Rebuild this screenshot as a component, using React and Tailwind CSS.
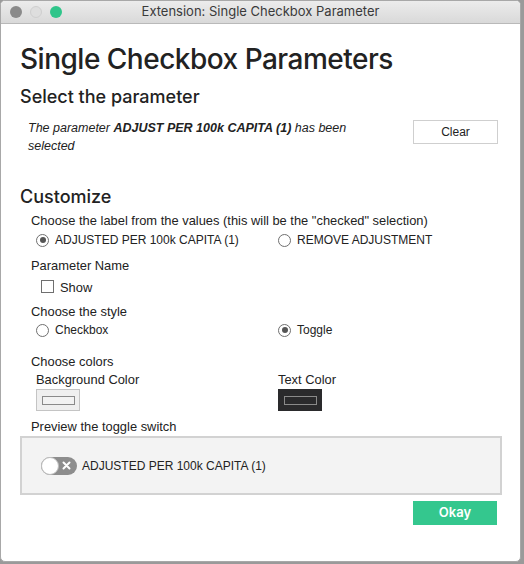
import React from 'react';

function Radio({ checked, label }) {
  return (
    <label className="flex items-center gap-[6px]">
      <span className="flex h-[13px] w-[13px] items-center justify-center rounded-full border border-[#6f6f6f] bg-white">
        {checked && <span className="h-[6px] w-[6px] rounded-full bg-[#555]" />}
      </span>
      <span className="text-[12px]">{label}</span>
    </label>
  );
}

export default function App() {
  return (
    <div className="relative h-[564px] w-[524px] overflow-hidden bg-[#9a9a9a]" style={{ fontFamily: '"Liberation Sans", Arial, sans-serif' }}>
      <div className="flex h-[562px] w-[521px] flex-col overflow-hidden rounded-[5px] border border-[#a8a8a8] bg-white">
        {/* title bar */}
        <div className="relative flex h-[23px] shrink-0 items-center border-b border-[#b9b9b9] bg-gradient-to-b from-[#ececec] to-[#d9d9d9]">
          <div className="flex items-center gap-[8px] pl-[9px]">
            <span className="h-[12px] w-[12px] rounded-full bg-[#8a8a8a]" />
            <span className="h-[12px] w-[12px] rounded-full border border-[#cfcfcf] bg-[#dedede]" />
            <span className="h-[12px] w-[12px] rounded-full bg-[#2fc58a]" />
          </div>
          <div className="absolute inset-x-0 text-center text-[13px] text-[#3a3a3a]" style={{ fontFamily: 'Inter, sans-serif' }}>
            Extension: Single Checkbox Parameter
          </div>
        </div>

        {/* content */}
        <div className="flex flex-col px-[19px] text-[#222]">
          <h1 className="mt-[18px] text-[28px] leading-[34px] font-medium tracking-[-0.5px] text-[#222]" style={{ fontFamily: 'Inter, sans-serif' }}>
            Single Checkbox Parameters
          </h1>
          <h2 className="mt-[9px] text-[18px] leading-[24px] font-medium text-[#222]" style={{ fontFamily: 'Inter, sans-serif' }}>
            Select the parameter
          </h2>

          <div className="mt-[8px] flex items-start justify-between">
            <p className="mt-[2px] w-[345px] pl-[8px] text-[12.5px] leading-[18px] italic">
              The parameter <b>ADJUST PER 100k CAPITA (1)</b> has been selected
            </p>
            <button className="mt-[3px] mr-[3px] h-[24px] w-[85px] border border-[#cfcfcf] bg-white text-[12px] text-[#222]">
              Clear
            </button>
          </div>

          <h2 className="mt-[30px] text-[18px] leading-[24px] font-medium" style={{ fontFamily: 'Inter, sans-serif' }}>
            Customize
          </h2>

          <div className="flex flex-col pl-[11px] text-[12.9px] leading-[16px]">
            <div className="mt-[4px]">Choose the label from the values (this will be the "checked" selection)</div>
            <div className="mt-[3px] grid grid-cols-[242px_1fr] pl-[5px]">
              <Radio checked label="ADJUSTED PER 100k CAPITA (1)" />
              <Radio label="REMOVE ADJUSTMENT" />
            </div>

            <div className="mt-[10px]">Parameter Name</div>
            <label className="mt-[3px] flex items-center gap-[6px] pl-[10px]">
              <span className="h-[13px] w-[13px] border border-[#6f6f6f] bg-white" />
              <span className="mt-[3px]">Show</span>
            </label>

            <div className="mt-[8px]">Choose the style</div>
            <div className="mt-[2px] grid grid-cols-[242px_1fr] pl-[5px]">
              <Radio label="Checkbox" />
              <Radio checked label="Toggle" />
            </div>

            <div className="mt-[16px]">Choose colors</div>
            <div className="mt-[2px] grid grid-cols-[242px_1fr] pl-[5px]">
              <div className="flex flex-col gap-[1px]">
                <span>Background Color</span>
                <span className="flex h-[22px] w-[44px] items-center justify-center border border-[#c4c4c4] bg-[#efefef]">
                  <span className="h-[9px] w-[33px] border border-[#8a8a8a] bg-[#f2f2f2]" />
                </span>
              </div>
              <div className="flex flex-col gap-[1px]">
                <span>Text Color</span>
                <span className="flex h-[22px] w-[44px] items-center justify-center bg-[#2a2a2c]">
                  <span className="h-[9px] w-[33px] border border-[#8a8a8a] bg-[#2a2a2c]" />
                </span>
              </div>
            </div>

            <div className="mt-[8px]">Preview the toggle switch</div>
          </div>

          <div className="mt-[1px] -mr-[1px] flex h-[59px] items-center border-2 border-[#d2d2d2] bg-[#f3f3f3] pl-[19px] text-[12px]">
            <span className="relative mr-[5px] h-[18px] w-[36px] rounded-full bg-[#8d8d8d]">
              <span className="absolute left-0 top-0 h-[18px] w-[18px] rounded-full border border-[#bdbdbd] bg-white" />
              <svg className="absolute right-[6px] top-[4.5px]" width="9" height="9" viewBox="0 0 9 9">
                <path d="M1.5 1.5 L7.5 7.5 M7.5 1.5 L1.5 7.5" stroke="#fff" strokeWidth="2" strokeLinecap="round" />
              </svg>
            </span>
            <span>ADJUSTED PER 100k CAPITA (1)</span>
          </div>

          <div className="mt-[6px] flex justify-end pr-[4px]">
            <button className="h-[24px] w-[84px] bg-[#34c78e] text-[13px] font-semibold text-white" style={{ fontFamily: 'Inter, sans-serif' }}>
              Okay
            </button>
          </div>
        </div>
      </div>
    </div>
  );
}
